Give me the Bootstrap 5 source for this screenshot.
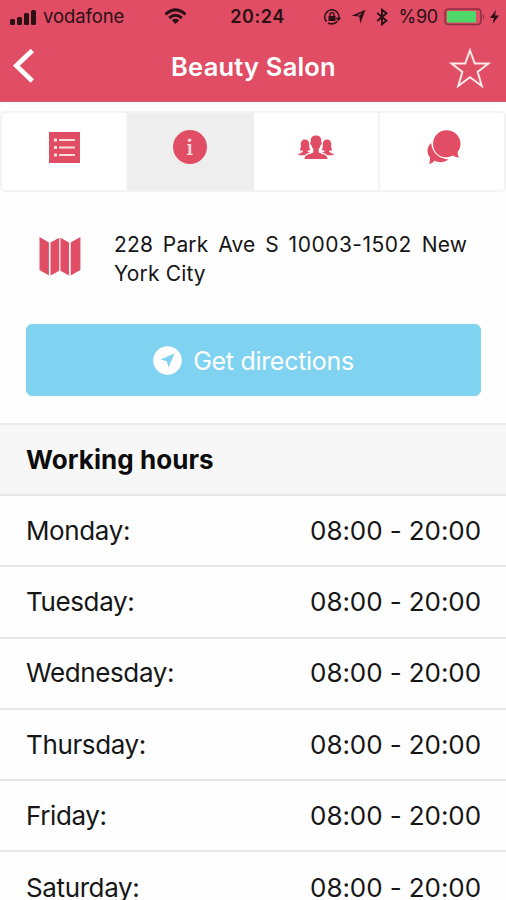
<!DOCTYPE html>
<html lang="en">
<head>
<meta charset="utf-8">
<meta name="viewport" content="width=device-width, initial-scale=1">
<title>Beauty Salon</title>
<link rel="stylesheet" href="https://cdn.jsdelivr.net/npm/bootstrap@5.3.0/dist/css/bootstrap.min.css">
<style>
:root { --brand: #e14d65; }
body { font-family: Inter, "Liberation Sans", sans-serif; color: #161616; background: #fefefe; height: 900px; overflow: hidden; }
svg { display: block; flex: none; }
.app-head { background: var(--brand); height: 102px; border-bottom: 1px solid #cf5b6d; }
.status-bar { height: 33px; padding: 0 7px 0 10px; color: #2b1016; font-size: 18px; line-height: 33px; }
.carrier { margin-left: 6px; font-size: 18.5px; letter-spacing: -.1px; }
.wifi { margin-left: 40px; }
.clock { margin-left: 43px; font-weight: 600; font-size: 18px; letter-spacing: .6px; }
.status-right { gap: 10px; }
.pct { font-size: 18px; margin-right: -4px; letter-spacing: -.2px; }
.bolt { margin-left: -6px; }
.title-bar { height: 68px; padding: 0 15px 0 13px; }
.title-bar h1 { font-size: 25.5px; font-weight: 600; line-height: 67px; letter-spacing: .2px; margin-left: 23px; padding-bottom: 2px; }
.tabs { margin: 9px 0 0; height: 81px; border: 2px solid #f3f3f3; border-radius: 5px; background: #fff; overflow: hidden; }
.tabs a { color: var(--brand); border-right: 2px solid #f3f3f3; padding-bottom: 9px; }
.tabs a:last-child { border-right: 0; }
.tabs a.active { background: #eee; border-color: #eee; }
.address { padding: 38px 39px 0; height: 132px; gap: 33px; }
.address svg { margin-top: 7px; }
.address p { font-size: 21px; line-height: 28.5px; text-align: justify; padding-top: 1px; letter-spacing: .15px; }
.address .zip { letter-spacing: .5px; }
.btn-go { --bs-btn-color: #fff; --bs-btn-bg: #7fd3f0; --bs-btn-border-color: #7fd3f0; --bs-btn-hover-bg: #6cc9ea; --bs-btn-hover-color: #fff; margin: 0 25px 0 26px; height: 72px; font-size: 25px; gap: 11px; border-radius: 6px; letter-spacing: -.3px; }
.btn-go span { padding-top: 3px; }
.hours { margin-top: 27px; --bs-list-group-bg: transparent; --bs-list-group-color: #161616; font-size: 26px; line-height: 32px; }
.hours .list-group-item { height: 71.3px; padding: 0 25px 0 26px; border-color: #e6e6e6; border-width: 0 0 2px; }
.hours .list-group-item span:first-child { letter-spacing: -.38px; }
.hours .list-group-item span:last-child { letter-spacing: -.08px; }
.hours .hours-title { background: #f7f7f7; border-top: 2px solid #ececec; height: 73px; font-weight: 700; color: #0c0c0c; letter-spacing: .05px; }
</style>
<script src="https://cdn.jsdelivr.net/npm/bootstrap@5.3.0/dist/js/bootstrap.bundle.min.js"></script>
</head>
<body>
<header class="app-head">
  <div class="status-bar d-flex align-items-center justify-content-between">
    <div class="d-flex align-items-center">
      <svg width="27" height="16" fill="currentColor"><rect y="10" width="5" height="6" rx="1.5"/><rect x="7" y="8" width="5" height="8" rx="1.5"/><rect x="14" y="4" width="5" height="12" rx="1.5"/><rect x="21" y="1" width="5" height="15" rx="1.5"/></svg>
      <span class="carrier">vodafone</span>
      <svg class="wifi" width="23" height="17" fill="none" stroke="currentColor" stroke-width="3"><path d="M1.5 6.3Q11.5-2.6 21.500 6.300M5.200 10Q11.500 4.600 17.800 10"/><path d="M7.800 12.200Q11.500 9.300 15.200 12.200L11.500 16Z" fill="currentColor" stroke="none"/></svg>
      <span class="clock">20:24</span>
    </div>
    <div class="status-right d-flex align-items-center">
      <svg width="18" height="18" fill="none" stroke="currentColor" stroke-width="1.600"><path d="M3.500 13.500A7 7 0 1 1 15.300 11.500M14.300 13.200A7 7 0 0 1 5 14.800"/><path d="M13.200 9.800l2.200 2.500 2-2.800" stroke-width="1.300"/><rect x="5.500" y="8" width="7" height="5" fill="currentColor" stroke="none"/><path d="M7 8.500V6.700a2 2 0 0 1 4 0V8.500" stroke-width="1.300"/></svg>
      <svg width="15" height="15" fill="currentColor"><path fill-rule="evenodd" d="M14.500 .8L9.300 14.500 8.300 7.600 .5 6.800ZM11 3.800L6 6.200 8.800 6.500Z"/></svg>
      <svg width="12" height="18" fill="none" stroke="currentColor" stroke-width="1.900"><path d="M1.200 5L10.500 12.800 6 16.300V1.700L10.500 5.200 1.200 13"/></svg>
      <span class="pct">%90</span>
      <svg width="42" height="18" fill="none"><rect x="1" y="1" width="36" height="15.500" rx="3.500" stroke="#8a2e40" stroke-width="1.500"/><rect x="3" y="3" width="29" height="11.500" rx="1" fill="#4fd867"/><path d="M39 6q2.500 2.700 0 5.500z" fill="#8a2e40"/></svg>
      <svg class="bolt" width="9" height="14" fill="currentColor"><path d="M6 0L0 8H4L2.500 14 9 5.500H5Z"/></svg>
    </div>
  </div>
  <div class="title-bar d-flex align-items-center justify-content-between">
    <a href="#" aria-label="Back"><svg width="22" height="36" fill="none" stroke="#fff" stroke-width="4.800"><path d="M19.300 1.500L3.300 16.700 19.300 32"/></svg></a>
    <h1 class="text-white mb-0">Beauty Salon</h1>
    <a href="#" aria-label="Favourite"><svg width="42" height="42" fill="none" stroke="#fde9e5" stroke-width="2"><path d="M21 4.500L25.800 17.500H39.500L28.600 25.900 32.800 40 21 31.300 9.200 40 13.400 25.900 2.500 17.500H16.200Z"/></svg></a>
  </div>
</header>
<nav class="tabs row g-0">
  <a href="#" aria-label="Services" class="col d-flex align-items-center justify-content-center"><svg width="31" height="31"><path fill="currentColor" d="M0 0H31V31H0Z"/><path d="M10 8H26M10 15.500H26M10 23H26" stroke="#fbdcdc" stroke-width="2"/><path d="M5 8H8M5 15.500H8M5 23H8" stroke="#fbdcdc" stroke-width="3"/></svg></a>
  <a href="#" aria-label="Information" class="col active d-flex align-items-center justify-content-center"><svg width="34" height="34"><circle cx="17" cy="17" r="17" fill="currentColor"/><g fill="#fbdcdc"><circle cx="16.600" cy="10.300" r="1.800"/><path d="M14 14H18.200V23.700H19.700V25H14V23.700H15.500V15.300H14Z"/></g></svg></a>
  <a href="#" aria-label="Staff" class="col d-flex align-items-center justify-content-center"><svg width="36" height="25" viewBox="0 0 36 25" fill="currentColor"><path d="M18 .5C21.500 .5 23.500 2.500 23.200 6.500 24.300 7 23.700 10 22.500 10.200 22.200 12 21.500 13 20.700 14V17.300C23 19.300 29.500 19 29.500 24H6.500C6.500 19 13 19.300 15.300 17.300V14C14.500 13 13.800 12 13.500 10.200 12.300 10 11.700 7 12.800 6.500 12.500 2.500 14.500 .5 18 .5Z"/><path id="side" d="M7 4.500C3.800 4.500 2.500 7 2.800 10 2.900 12.500 2.500 14 1.700 15 3 15.700 4 15.700 4.800 15.800V17C3.500 18 .5 18 .3 20.300H6.500C8 18.500 10.300 17.900 12 17.200 10.800 16.800 9.500 16.800 9.200 15.700 10.500 15.700 11.500 15.500 12.300 14.800 11.200 13.500 11.300 12 11.200 9.500 11.200 6.500 9.800 4.500 7 4.500Z"/><use href="#side" transform="matrix(-1 0 0 1 36 0)"/></svg></a>
  <a href="#" aria-label="Reviews" class="col d-flex align-items-center justify-content-center"><svg class="ms-1" width="34" height="34" fill="currentColor"><path d="M4.200 13C5 22 11 28.500 21.500 29.500 17 32.500 12 33 7.500 30.800 6 32.500 4 33.800 2 33.800 3 31.500 3.300 29.500 2.700 27-.5 22.500-.5 17.500 4.200 13Z"/><path d="M19.500 .3C27.500 .3 33.500 6.300 33.500 13.700 33.500 17 32.500 19.500 30.700 21.700 30.500 24 31 26 32.300 27.600 29.500 27.600 27.700 26.800 26 25.600 15 31 6 23 6 13.700 6 6.300 12 .3 19.500 .3Z"/></svg></a>
</nav>
<section class="address d-flex align-items-start">
  <svg width="42" height="39" viewBox="0 0 42 39" fill="var(--brand)"><path d="M.5 0L9.900 5.500V38.500L.5 33ZM11.500 5.500L20.200 .8V33.700L11.500 38.500ZM21.400 .8L30 5.500V38.500L21.400 33.700ZM31.700 5.500L41.400 0V33L31.700 38.500Z"/></svg>
  <p class="mb-0 flex-fill">228 Park Ave S <span class="zip">10003-1502</span> New York City</p>
</section>
<a href="#" class="btn btn-go d-flex align-items-center justify-content-center">
  <svg width="29" height="29"><circle cx="14.500" cy="14.500" r="14.300" fill="#fff"/><path d="M21.500 7.500L15.500 21.500 13.800 15.300 7.500 13.500Z" fill="#7fd3f0"/></svg>
  <span>Get directions</span>
</a>
<ul class="hours list-group list-group-flush">
  <li class="list-group-item hours-title d-flex align-items-center">Working hours</li>
  <li class="list-group-item d-flex align-items-center justify-content-between"><span>Monday:</span><span>08:00 - 20:00</span></li>
  <li class="list-group-item d-flex align-items-center justify-content-between"><span>Tuesday:</span><span>08:00 - 20:00</span></li>
  <li class="list-group-item d-flex align-items-center justify-content-between"><span>Wednesday:</span><span>08:00 - 20:00</span></li>
  <li class="list-group-item d-flex align-items-center justify-content-between"><span>Thursday:</span><span>08:00 - 20:00</span></li>
  <li class="list-group-item d-flex align-items-center justify-content-between"><span>Friday:</span><span>08:00 - 20:00</span></li>
  <li class="list-group-item d-flex align-items-center justify-content-between"><span>Saturday:</span><span>08:00 - 20:00</span></li>
</ul>
</body>
</html>
